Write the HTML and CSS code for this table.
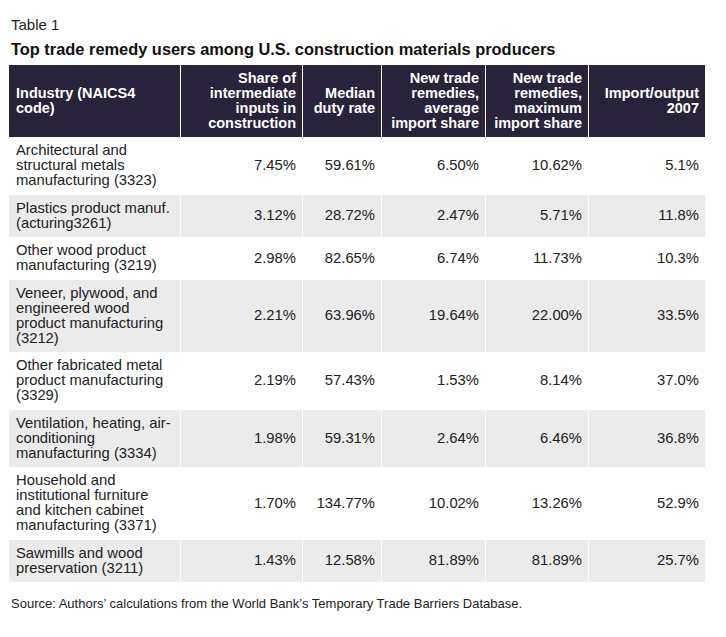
FILE: index.html
```html
<!DOCTYPE html>
<html lang="en">
<head>
<meta charset="utf-8">
<title>Table 1</title>
<link rel="stylesheet" href="styles.css">
</head>
<body>
<div class="page">
  <div class="label">Table 1</div>
  <h1 class="title">Top trade remedy users among U.S. construction materials producers</h1>
  <table class="data">
    <colgroup>
      <col class="c1"><col class="c2"><col class="c3"><col class="c4"><col class="c5"><col class="c6">
    </colgroup>
    <thead>
      <tr>
        <th class="left">Industry (NAICS4<br>code)</th>
        <th>Share of<br>intermediate<br>inputs in<br>construction</th>
        <th>Median<br>duty rate</th>
        <th>New trade<br>remedies,<br>average<br>import share</th>
        <th>New trade<br>remedies,<br>maximum<br>import share</th>
        <th>Import/output<br>2007</th>
      </tr>
    </thead>
    <tbody>
      <tr>
        <td class="left">Architectural and<br>structural metals<br>manufacturing (3323)</td>
        <td>7.45%</td><td>59.61%</td><td>6.50%</td><td>10.62%</td><td>5.1%</td>
      </tr>
      <tr>
        <td class="left">Plastics product manuf.<br>(acturing3261)</td>
        <td>3.12%</td><td>28.72%</td><td>2.47%</td><td>5.71%</td><td>11.8%</td>
      </tr>
      <tr>
        <td class="left">Other wood product<br>manufacturing (3219)</td>
        <td>2.98%</td><td>82.65%</td><td>6.74%</td><td>11.73%</td><td>10.3%</td>
      </tr>
      <tr>
        <td class="left">Veneer, plywood, and<br>engineered wood<br>product manufacturing<br>(3212)</td>
        <td>2.21%</td><td>63.96%</td><td>19.64%</td><td>22.00%</td><td>33.5%</td>
      </tr>
      <tr>
        <td class="left">Other fabricated metal<br>product manufacturing<br>(3329)</td>
        <td>2.19%</td><td>57.43%</td><td>1.53%</td><td>8.14%</td><td>37.0%</td>
      </tr>
      <tr>
        <td class="left">Ventilation, heating, air-<br>conditioning<br>manufacturing (3334)</td>
        <td>1.98%</td><td>59.31%</td><td>2.64%</td><td>6.46%</td><td>36.8%</td>
      </tr>
      <tr>
        <td class="left">Household and<br>institutional furniture<br>and kitchen cabinet<br>manufacturing (3371)</td>
        <td>1.70%</td><td>134.77%</td><td>10.02%</td><td>13.26%</td><td>52.9%</td>
      </tr>
      <tr>
        <td class="left">Sawmills and wood<br>preservation (3211)</td>
        <td>1.43%</td><td>12.58%</td><td>81.89%</td><td>81.89%</td><td>25.7%</td>
      </tr>
    </tbody>
  </table>
  <p class="source">Source: Authors’ calculations from the World Bank’s Temporary Trade Barriers Database.</p>
</div>
</body>
</html>
```

FILE: styles.css
```css
html, body {
  margin: 0;
  padding: 0;
  background: #ffffff;
}

.page {
  padding: 16px 0 0 8px;
  font-family: "Liberation Sans", Arial, sans-serif;
  color: #1e1e1e;
}

.label {
  margin-left: 3px;
  font-size: 15px;
  line-height: 18px;
}

.title {
  margin: 5px 0 5px 3px;
  font-size: 16.4px;
  line-height: 20px;
  font-weight: bold;
  color: #111111;
}

.data {
  border-collapse: separate;
  border-spacing: 1px;
  table-layout: fixed;
  width: 698px;
}

.c1 { width: 171px; }
.c2 { width: 121px; }
.c3 { width: 78px; }
.c4 { width: 103px; }
.c5 { width: 102px; }
.c6 { width: 116px; }

.data th {
  background: #28223a;
  color: #ffffff;
  font-weight: bold;
  font-size: 14.5px;
  line-height: 15px;
  text-align: right;
  vertical-align: middle;
  padding: 5.75px 6px 5.75px 7px;
  white-space: nowrap;
  overflow: hidden;
}

.data td {
  font-size: 14.8px;
  line-height: 15px;
  text-align: right;
  vertical-align: middle;
  padding: 5.75px 6px 5.75px 7px;
  color: #222222;
  white-space: nowrap;
}

.data tbody tr:nth-child(even) td {
  background: #ebebeb;
}

.data tbody tr:nth-child(odd) td {
  background: #ffffff;
}

.data .left {
  text-align: left;
}

.source {
  margin: 13px 0 0 3px;
  font-family: "Liberation Sans Narrow", "Liberation Sans", Arial, sans-serif;
  font-stretch: condensed;
  font-size: 13px;
  line-height: 16px;
  color: #222222;
}
```
